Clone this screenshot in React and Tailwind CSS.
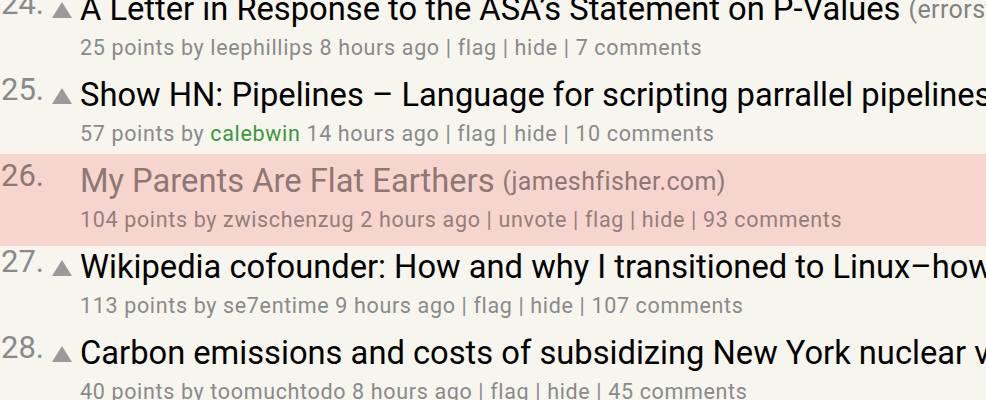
import React from 'react';

const stories = [
  {
    rank: 24,
    title: 'A Letter in Response to the ASA’s Statement on P-Values',
    site: 'errorstatistics.com',
    points: 25,
    user: 'leephillips',
    age: '8 hours ago',
    comments: '7 comments',
  },
  {
    rank: 25,
    title: 'Show HN: Pipelines – Language for scripting parrallel pipelines',
    site: 'github.com',
    points: 57,
    user: 'calebwin',
    newUser: true,
    age: '14 hours ago',
    comments: '10 comments',
  },
  {
    rank: 26,
    title: 'My Parents Are Flat Earthers',
    site: 'jameshfisher.com',
    points: 104,
    user: 'zwischenzug',
    age: '2 hours ago',
    comments: '93 comments',
    voted: true,
  },
  {
    rank: 27,
    title: 'Wikipedia cofounder: How and why I transitioned to Linux–how you can too',
    site: 'zdnet.com',
    points: 113,
    user: 'se7entime',
    age: '9 hours ago',
    comments: '107 comments',
  },
  {
    rank: 28,
    title: 'Carbon emissions and costs of subsidizing New York nuclear vs. renewables',
    site: 'utilitydive.com',
    points: 40,
    user: 'toomuchtodo',
    age: '8 hours ago',
    comments: '45 comments',
  },
];

const Story = ({ s }) => {
  return (
    <div
      className={`flex whitespace-nowrap ${
        s.voted ? 'bg-[#f6d5cf] py-[8px] -my-[3px]' : 'py-[5px]'
      }`}
    >
      <div
        className={`w-[44px] shrink-0 text-right text-[31px] leading-[34px] -mt-[3px] ${
          s.voted ? 'text-[#8f7774]' : 'text-[#8a8a8a]'
        }`}
      >
        {s.rank}.
      </div>
      <div className="w-[36px] shrink-0 flex justify-center pt-[12px]">
        {!s.voted && (
          <svg width="20" height="16" viewBox="0 0 20 16">
            <polygon points="10,0 20,16 0,16" fill="#9a9a9a" />
          </svg>
        )}
      </div>
      <div className="flex flex-col">
        <div className="h-[40px] flex items-center">
          <span className={`text-[32.7px] ${s.voted ? 'text-[#8f7774]' : 'text-black'}`}>
            {s.title}
          </span>
          <span
            className={`ml-[8px] text-[25px] tracking-[0.4px] ${
              s.voted ? 'text-[#8f7774]' : 'text-[#828282]'
            }`}
          >
            ({s.site})
          </span>
        </div>
        <div
          className={`h-[36px] flex items-center text-[21.5px] tracking-[0.65px] ${
            s.voted ? 'text-[#957d7a]' : 'text-[#8a8a8a]'
          }`}
        >
          <span>
            {s.points} points by{' '}
            <span className={s.newUser ? 'text-[#3c963c]' : ''}>{s.user}</span> {s.age}
            {s.voted && ' | unvote'} | flag | hide | {s.comments}
          </span>
        </div>
      </div>
    </div>
  );
};

export default function App() {
  return (
    <div className="w-[986px] h-[400px] overflow-hidden bg-[#f6f6ef] font-['Roboto',sans-serif]">
      <div className="-mt-[15px]">
        {stories.map((s) => (
          <Story key={s.rank} s={s} />
        ))}
      </div>
    </div>
  );
}
